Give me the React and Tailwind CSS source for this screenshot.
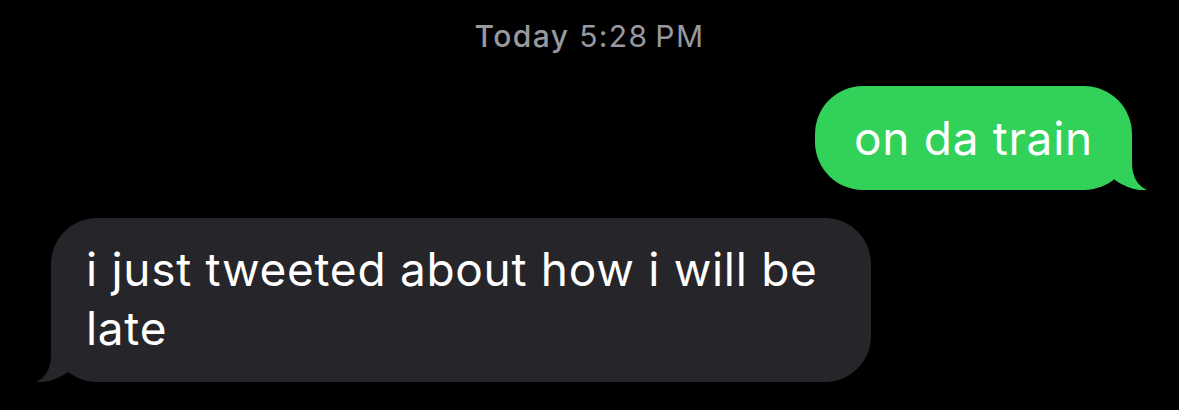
const tailPath = 'M0 0 L30 0 L30 18 C30 32 36 41 45 45 C36 46 24 43 13 35 L0 10 Z';

export default function App() {
  return (
    <div className="w-[1179px] h-[410px] bg-black overflow-hidden" style={{ fontFamily: 'Inter, "Noto Sans", sans-serif' }}>
      <div className="pt-[18px] text-center text-[30px] leading-[36px] tracking-[1.4px] text-[#98989f]">
        <span className="font-medium">Today</span> <span>5:28&#8201;PM</span>
      </div>

      <div className="mt-[32px] flex justify-end pr-[47px]">
        <div className="relative w-[317px] h-[104px] rounded-[48px] bg-[#32d15a] flex items-center pl-[39px]">
          <span className="relative z-10 text-[46px] leading-[59px] text-white tracking-[0.7px]">on da train</span>
          <svg className="absolute right-[-15px] bottom-0" width="45" height="45" viewBox="0 0 45 45">
            <path d="M0 0 L30 0 L30 18 C30 32 36 41 45 45 C36 46 24 43 13 35 L0 10 Z" fill="#32d15a" />
          </svg>
        </div>
      </div>

      <div className="mt-[28px] flex pl-[51px]">
        <div className="relative w-[820px] h-[164px] rounded-[46px] bg-[#262529] pl-[35px] pt-[22px]">
          <p className="relative z-10 text-[46px] leading-[59px] text-white tracking-[0.7px]">
            i just tweeted about how i will be<br />late
          </p>
          <svg className="absolute left-[-15px] bottom-0 -scale-x-100" width="45" height="45" viewBox="0 0 45 45">
            <path d={tailPath} fill="#262529" />
          </svg>
        </div>
      </div>
    </div>
  );
}
